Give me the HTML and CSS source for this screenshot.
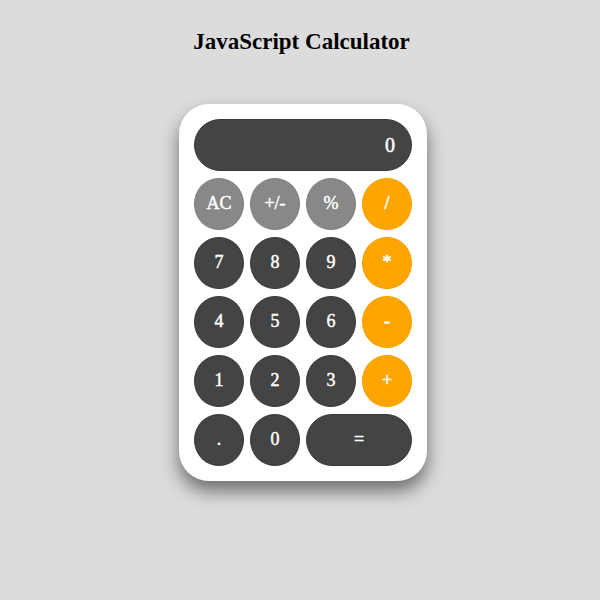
FILE: index.html
```html
<!DOCTYPE html>
<html>
<head>
<meta charset="utf-8">
<link rel="stylesheet" href="styles.css">
</head>
<body>
<h1 class="title">JavaScript Calculator</h1>
<div class="wrap">
  <div class="calc">
    <div class="display">0</div>
    <div class="keys">
      <button class="key gray">AC</button>
      <button class="key gray">+/-</button>
      <button class="key gray">%</button>
      <button class="key op">/</button>
      <button class="key">7</button>
      <button class="key">8</button>
      <button class="key">9</button>
      <button class="key op">*</button>
      <button class="key">4</button>
      <button class="key">5</button>
      <button class="key">6</button>
      <button class="key op">-</button>
      <button class="key">1</button>
      <button class="key">2</button>
      <button class="key">3</button>
      <button class="key op">+</button>
      <button class="key">.</button>
      <button class="key">0</button>
      <button class="key wide">=</button>
    </div>
  </div>
</div>
</body>
</html>
```
FILE: styles.css
```css
html, body {
  margin: 0;
  padding: 0;
  background: #dcdcdc;
}
body {
  font-family: "Liberation Serif", "Times New Roman", serif;
  padding-top: 8px;
  min-height: 600px;
  box-sizing: border-box;
}
.title {
  margin: 20px 0 0;
  font-size: 23px;
  line-height: 28px;
  font-weight: bold;
  text-align: center;
  color: #000;
  padding-left: 3px;
}
.wrap {
  display: flex;
  justify-content: center;
  padding-top: 48px;
  padding-bottom: 40px;
  padding-left: 6px;
}
.calc {
  width: 218px;
  padding: 15px;
  background: #fff;
  border-radius: 30px;
  box-shadow: 0 10px 18px rgba(0, 0, 0, 0.5);
  display: flex;
  flex-direction: column;
  gap: 6.5px;
}
.display {
  height: 52px;
  background: #444;
  border-radius: 26px;
  border: 1px solid #3a3a3a;
  box-sizing: border-box;
  color: #fff;
  font-size: 20px;
  font-weight: normal;
  -webkit-text-stroke: 0.5px #fff;
  display: flex;
  align-items: center;
  justify-content: flex-end;
  padding-right: 16px;
}
.keys {
  display: grid;
  grid-template-columns: repeat(4, 50px);
  grid-auto-rows: 52.5px;
  column-gap: 6px;
  row-gap: 6.5px;
}
.key {
  margin: 0;
  padding: 0;
  border: 1px solid #3a3a3a;
  border-radius: 50%;
  background: #444;
  color: #fff;
  font-family: "Liberation Serif", "Times New Roman", serif;
  font-size: 18px;
  font-weight: normal;
  -webkit-text-stroke: 0.45px #fff;
  display: flex;
  align-items: center;
  justify-content: center;
}
.key.gray {
  background: #888;
  border-color: #808080;
}
.key.op {
  background: #ffa500;
  border-color: #f5a000;
  -webkit-text-stroke: 0.6px #fff;
}
.key.wide {
  grid-column: span 2;
  border-radius: 26px;
}
```
